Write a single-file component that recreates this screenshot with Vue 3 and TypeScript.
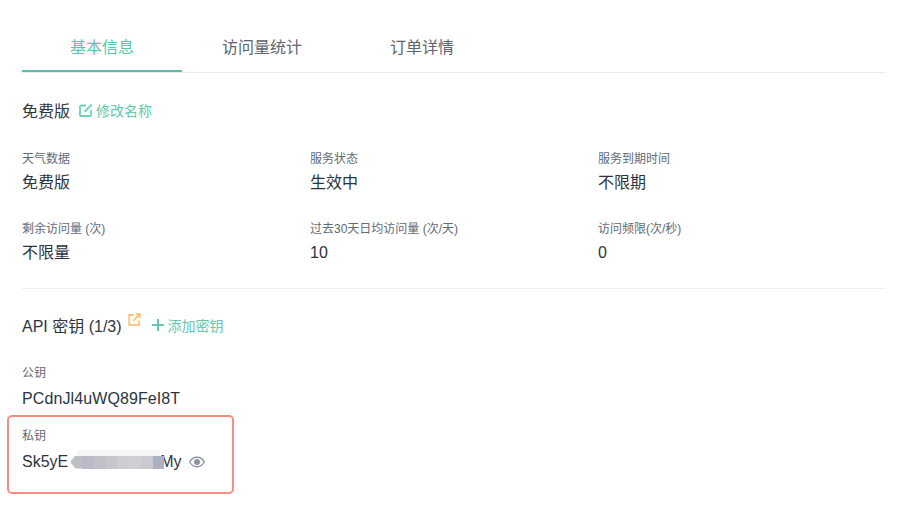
<script setup lang="ts">
interface Item { label: string; value: string }
const items: Item[] = [
  { label: '天气数据', value: '免费版' },
  { label: '服务状态', value: '生效中' },
  { label: '服务到期时间', value: '不限期' },
  { label: '剩余访问量 (次)', value: '不限量' },
  { label: '过去30天日均访问量 (次/天)', value: '10' },
  { label: '访问频限(次/秒)', value: '0' },
]
const tabs = ['基本信息', '访问量统计', '订单详情']
const cells = ['#bebfc5', '#b9bcc8', '#c1c1c8', '#c6c6cc', '#cdcdd1', '#d0d0d4', '#cacad0', '#adb0bf']
</script>

<template>
  <div class="page">
    <div class="tabs">
      <div v-for="(t, i) in tabs" :key="t" class="tab" :class="{ active: i === 0 }">{{ t }}</div>
    </div>

    <div class="heading plan">
      <span class="title">免费版</span>
      <span class="link">
        <svg class="edit" width="14" height="14" viewBox="0 0 14 14" fill="none" stroke="#74d0b8" stroke-width="1.800">
          <path d="M12 7v5a1 1 0 0 1-1 1H2a1 1 0 0 1-1-1V3.500a1 1 0 0 1 1-1h5" />
          <path d="M5.500 8.800L12.800 1.400" stroke="#7fd4be" stroke-width="2.200" />
        </svg>
        修改名称
      </span>
    </div>

    <div class="grid">
      <div v-for="it in items" :key="it.label" class="item">
        <div class="label">{{ it.label }}</div>
        <div class="value">{{ it.value }}</div>
      </div>
    </div>

    <div class="divider"></div>

    <div class="heading api">
      <span class="title">API 密钥 (1/3)</span>
      <svg class="ext" width="13" height="13" viewBox="0 0 13 13" fill="none" stroke="#fac36f" stroke-width="1.800">
        <path d="M5.500 2H1.200v9.800H11V7.500" />
        <path d="M5.200 7.800L11.400 1.600M8 1.200h3.800V5" />
      </svg>
      <span class="link add">
        <svg width="12" height="12" viewBox="0 0 12 12" stroke="currentColor" stroke-width="2">
          <path d="M6 0v12M0 6h12" />
        </svg>
        添加密钥
      </span>
    </div>

    <div class="key">
      <div class="label">公钥</div>
      <div class="value public">PCdnJl4uWQ89FeI8T</div>
    </div>

    <div class="key secret">
      <div class="label">私钥</div>
      <div class="value secret-row">
        <span>Sk5yE</span>
        <span class="mosaic">
          <i v-for="(c, i) in cells" :key="i" :style="{ background: c }"></i>
        </span>
        <span>My</span>
        <svg class="eye" width="16" height="12" viewBox="0 0 16 12">
          <path d="M.7 6C2.400 2.900 5 1.300 8 1.300S13.600 2.900 15.300 6C13.600 9.100 11 10.700 8 10.700S2.400 9.100.7 6z" fill="none" stroke="#8d93a0" stroke-width="1.400" />
          <circle cx="8" cy="6" r="3" fill="#8d93a0" />
        </svg>
      </div>
    </div>
  </div>
</template>

<style>
html, body { margin: 0; background: #fff; }
</style>

<style scoped>
.page {
  width: 908px;
  height: 514px;
  box-sizing: border-box;
  padding: 24px 22px 0;
  overflow: hidden;
  background: #fff;
  font-family: "Liberation Sans", "Noto Sans CJK SC", sans-serif;
  color: #2d3748;
}
.tabs {
  display: flex;
  height: 48px;
  border-bottom: 1px solid #e9edf3;
}
.tab {
  width: 160px;
  height: 46px;
  line-height: 47px;
  text-align: center;
  font-size: 16px;
  color: #5c6470;
}
.tab.active {
  color: #5cc5ab;
  border-bottom: 2px solid #55c1a7;
}
.heading {
  display: flex;
  align-items: center;
}
.plan { margin-top: 26px; height: 22px; }
.title {
  font-size: 16px;
  color: #2b3442;
}
.link {
  display: inline-flex;
  align-items: center;
  font-size: 14px;
  color: #62c8ae;
}
.plan .link { margin-left: 9px; }
.edit { margin-right: 3px; }
.grid {
  display: grid;
  grid-template-columns: repeat(3, 288px);
  row-gap: 18px;
  margin-top: 30px;
}
.item { height: 52px; }
.label {
  font-size: 12px;
  line-height: 16px;
  color: #626a76;
}
.value {
  margin-top: 4px;
  font-size: 16px;
  line-height: 24px;
  color: #2b3442;
}
.divider {
  height: 1px;
  margin-top: 15px;
  background: #eceff4;
}
.api { margin-top: 25px; height: 22px; }
.ext { margin: -11px 0 0 6px; }
.add { margin-left: 11px; }
.add svg { margin-right: 4px; }
.key { margin-top: 29px; }
.key .value { margin-top: 6px; }
.public { letter-spacing: 0.1px; }
.secret {
  width: 227px;
  height: 79px;
  margin: 4px 0 0 -15px;
  padding: 11px 0 0 13px;
  box-sizing: border-box;
  border: 2px solid #fa8a85;
  border-radius: 5px;
}
.secret-row {
  display: flex;
  align-items: center;
}
.mosaic {
  position: relative;
  display: flex;
  width: 94px;
  height: 13px;
  margin: 0 -4px 0 2px;
  z-index: 1;
}
.mosaic::before {
  content: "";
  position: absolute;
  left: 8px;
  right: 4px;
  top: -6px;
  height: 6px;
  background: #f5f5f6;
}
.mosaic i { flex: 1; }
.mosaic i:first-child { clip-path: polygon(0 50%, 5px 0, 100% 0, 100% 100%, 5px 100%); }
.eye { margin-left: 7px; }
</style>
